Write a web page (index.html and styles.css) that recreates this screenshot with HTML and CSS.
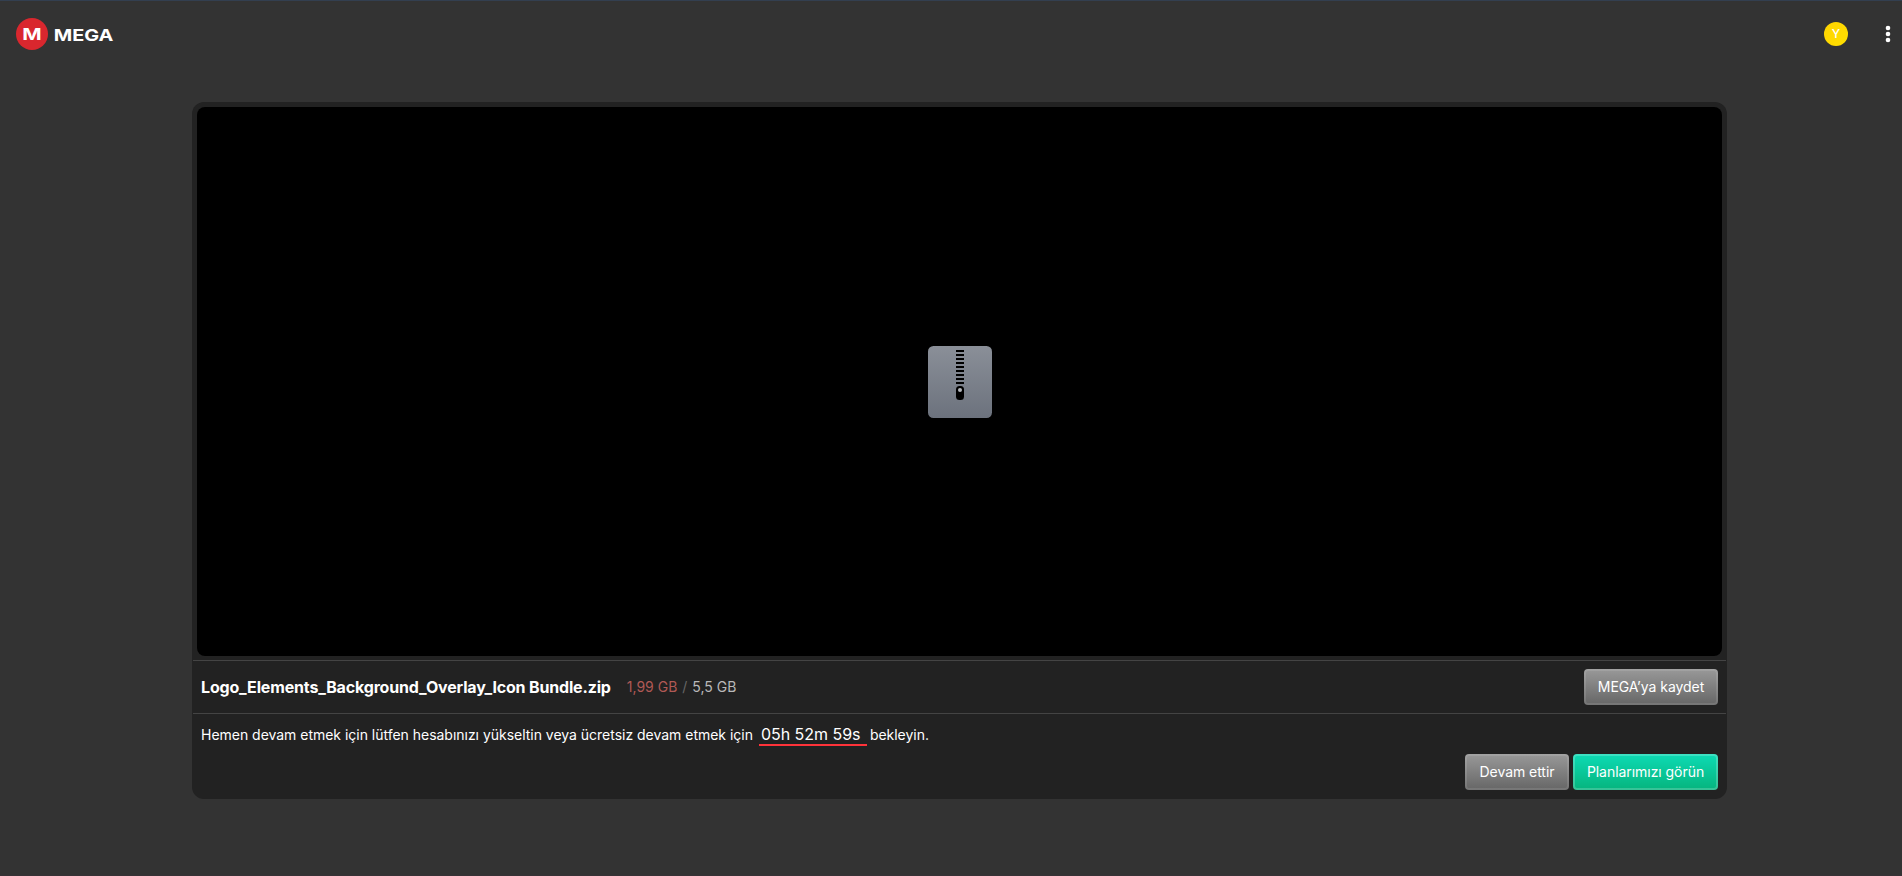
FILE: index.html
```html
<!DOCTYPE html>
<html lang="tr">
<head>
  <meta charset="UTF-8">
  <meta name="viewport" content="width=device-width, initial-scale=1.0">
  <title>MEGA</title>
  <link rel="stylesheet" href="styles.css">
</head>
<body>
  <!-- top bar -->
  <header class="top-bar">
    <svg class="logo" width="98" height="32" viewBox="0 0 98 32">
      <circle cx="16" cy="16" r="16" fill="#d9272e"/>
      <text class="logo-mark" x="6.3" y="22.2" textLength="19.4" lengthAdjust="spacingAndGlyphs">M</text>
      <text class="logo-name" x="37.8" y="22.5" textLength="59.6" lengthAdjust="spacingAndGlyphs">MEGA</text>
    </svg>
    <div class="top-right">
      <span class="avatar">Y</span>
      <svg class="menu-icon" width="6" height="18" viewBox="0 0 6 18">
        <circle cx="3" cy="3" r="2.3"/>
        <circle cx="3" cy="9" r="2.3"/>
        <circle cx="3" cy="15" r="2.3"/>
      </svg>
    </div>
  </header>

  <!-- download card -->
  <main class="download">
    <div class="preview">
      <svg width="64" height="72" viewBox="0 0 64 72">
        <defs>
          <linearGradient id="zip-bg" x1="0" y1="0" x2="0" y2="1">
            <stop offset="0" stop-color="#8a8f98"/>
            <stop offset="1" stop-color="#6c727d"/>
          </linearGradient>
        </defs>
        <rect width="64" height="72" rx="5.5" fill="url(#zip-bg)"/>
        <path d="M28 5h8M28 9h8M28 13h8M28 17h8M28 21h8M28 25h8M28 29h8M28 33h8M28 37h8" stroke="#000" stroke-width="2"/>
        <rect x="28" y="40" width="8" height="14" rx="3.5"/>
        <circle cx="32" cy="44" r="2" fill="#b5b8bd"/>
      </svg>
    </div>
    <div class="file-row">
      <h1 class="file-name">Logo_Elements_Background_Overlay_Icon Bundle.zip</h1>
      <div class="file-size">
        <span class="used">1,99 GB</span>
        <span class="slash">/</span>
        <span class="total">5,5 GB</span>
      </div>
      <button class="btn save">MEGA’ya kaydet</button>
    </div>
    <div class="quota">
      <p class="quota-text">
        <span>Hemen devam etmek için lütfen hesabınızı yükseltin veya ücretsiz devam etmek için</span>
        <span class="countdown">05h 52m 59s</span>
        <span>bekleyin.</span>
      </p>
      <div class="actions">
        <button class="btn resume">Devam ettir</button>
        <button class="btn green">Planlarımızı görün</button>
      </div>
    </div>
  </main>
</body>
</html>
```

FILE: styles.css
```css
* {
  margin: 0;
  padding: 0;
  box-sizing: border-box;
}
body {
  height: 876px;
  overflow: hidden;
  border-top: 1px solid #333f50;
  border-bottom: 1px solid #373236;
  background-color: #333;
  color: #fff;
  font-family: Inter, "Liberation Sans", sans-serif;
}
/* top bar */
.top-bar {
  display: flex;
  justify-content: space-between;
  height: 101px;
  padding: 17px 11px 0 16px;
}
.logo text {
  fill: #fff;
  font-family: Inter, sans-serif;
  font-size: 16.5px;
  font-weight: 700;
}
.top-right {
  display: flex;
  align-items: center;
  gap: 37px;
  height: 32px;
}
.avatar {
  width: 24px;
  height: 24px;
  border-radius: 50%;
  background: linear-gradient(135deg, #ffd300, #ffe000);
  font-size: 12px;
  font-weight: 500;
  line-height: 24px;
  text-align: center;
}
.menu-icon {
  fill: #fff;
}
/* download card */
.download {
  width: 1535px;
  height: 697px;
  margin-left: 192px;
  padding: 5px 1px 0;
  border-radius: 12px;
  background-color: #222;
}
.preview {
  display: flex;
  align-items: center;
  justify-content: center;
  height: 549px;
  margin: 0 4px 4px;
  border-radius: 8px;
  background-color: #000;
}
.file-row {
  display: flex;
  align-items: center;
  height: 54px;
  padding: 0 8px;
  border-top: 1px solid #444;
  border-bottom: 1px solid #444;
}
.file-name {
  font-size: 16px;
  font-weight: 700;
  line-height: 24px;
  letter-spacing: -0.165px;
  white-space: nowrap;
}
.file-size {
  display: flex;
  gap: 5px;
  margin-left: 16px;
  font-size: 14px;
  line-height: 24px;
}
.used {
  color: #b05955;
}
.slash {
  color: #666;
}
.total {
  color: #b9b9b9;
}
.btn {
  height: 36px;
  border: 2px solid rgba(255, 255, 255, 0.1);
  border-radius: 4px;
  background: linear-gradient(#999, #666) border-box;
  color: #fff;
  font-family: inherit;
  font-size: 14px;
  line-height: 32px;
  letter-spacing: -0.05px;
  white-space: nowrap;
}
.save {
  width: 134px;
  margin-left: auto;
}
.resume {
  width: 104px;
}
.green {
  width: 145px;
  border-color: rgba(255, 255, 255, 0.2);
  background: linear-gradient(#0ddbb5, #06b47d) border-box;
}
.quota {
  padding: 8px 8px 0;
}
.quota-text {
  display: flex;
  height: 28px;
  font-size: 14px;
  line-height: 26px;
  letter-spacing: -0.02px;
}
.countdown {
  width: 108px;
  height: 24px;
  margin: 0 3px 0 6px;
  padding-left: 2px;
  border-bottom: 2px solid #ff333a;
  font-size: 16px;
  line-height: 24px;
}
.actions {
  display: flex;
  justify-content: flex-end;
  gap: 4px;
  margin-top: 4px;
}
```
